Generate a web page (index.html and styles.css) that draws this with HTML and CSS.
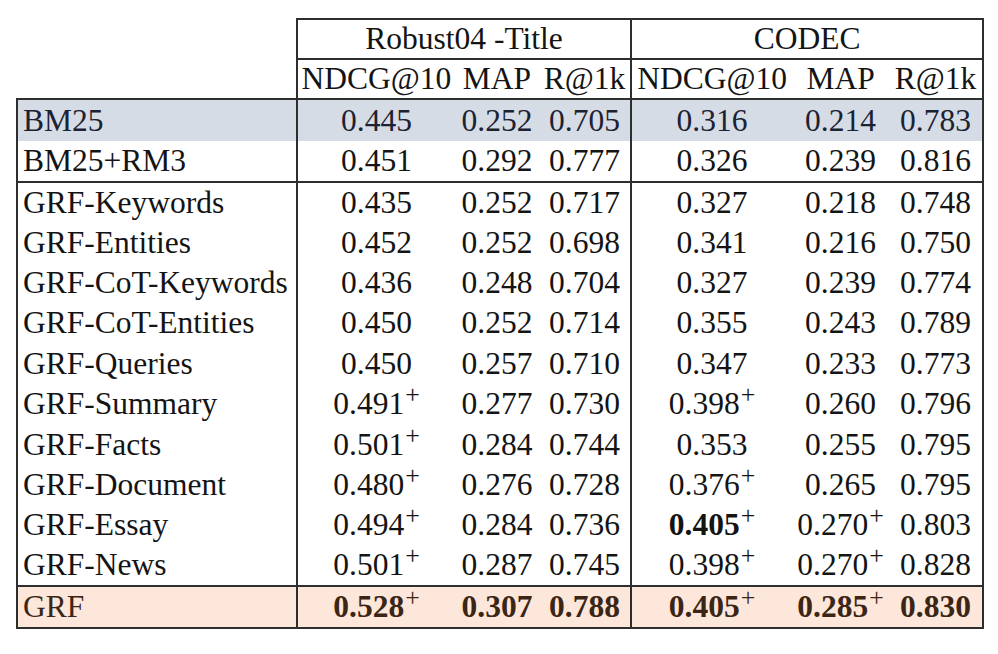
FILE: index.html
```html
<!DOCTYPE html>
<html>
<head>
<meta charset="utf-8">
<link rel="stylesheet" href="styles.css">
</head>
<body>
<table class="results">
  <colgroup>
    <col class="c-label">
    <col class="c-ndcg1">
    <col class="c-map1">
    <col class="c-rk1">
    <col class="c-ndcg2">
    <col class="c-map2">
    <col class="c-rk2">
  </colgroup>
  <thead>
    <tr class="hrow">
      <th class="blank"></th>
      <th colspan="3" class="grp">Robust04 -Title</th>
      <th colspan="3" class="grp">CODEC</th>
    </tr>
    <tr class="hrow sub">
      <th class="blank"></th>
      <th class="gl">NDCG@10</th>
      <th>MAP</th>
      <th class="gr">R@1k</th>
      <th class="gl">NDCG@10</th>
      <th>MAP</th>
      <th class="gr">R@1k</th>
    </tr>
  </thead>
  <tbody>
    <tr class="row base ruled">
      <td class="label">BM25</td><td class="gl">0.445</td><td>0.252</td><td class="gr">0.705</td><td class="gl">0.316</td><td>0.214</td><td class="gr">0.783</td>
    </tr>
    <tr class="row rm3">
      <td class="label">BM25+RM3</td><td class="gl">0.451</td><td>0.292</td><td class="gr">0.777</td><td class="gl">0.326</td><td>0.239</td><td class="gr">0.816</td>
    </tr>
    <tr class="row ruled">
      <td class="label">GRF-Keywords</td><td class="gl">0.435</td><td>0.252</td><td class="gr">0.717</td><td class="gl">0.327</td><td>0.218</td><td class="gr">0.748</td>
    </tr>
    <tr class="row">
      <td class="label">GRF-Entities</td><td class="gl">0.452</td><td>0.252</td><td class="gr">0.698</td><td class="gl">0.341</td><td>0.216</td><td class="gr">0.750</td>
    </tr>
    <tr class="row">
      <td class="label">GRF-CoT-Keywords</td><td class="gl">0.436</td><td>0.248</td><td class="gr">0.704</td><td class="gl">0.327</td><td>0.239</td><td class="gr">0.774</td>
    </tr>
    <tr class="row">
      <td class="label">GRF-CoT-Entities</td><td class="gl">0.450</td><td>0.252</td><td class="gr">0.714</td><td class="gl">0.355</td><td>0.243</td><td class="gr">0.789</td>
    </tr>
    <tr class="row">
      <td class="label">GRF-Queries</td><td class="gl">0.450</td><td>0.257</td><td class="gr">0.710</td><td class="gl">0.347</td><td>0.233</td><td class="gr">0.773</td>
    </tr>
    <tr class="row">
      <td class="label">GRF-Summary</td><td class="gl">0.491<sup>+</sup></td><td>0.277</td><td class="gr">0.730</td><td class="gl">0.398<sup>+</sup></td><td>0.260</td><td class="gr">0.796</td>
    </tr>
    <tr class="row">
      <td class="label">GRF-Facts</td><td class="gl">0.501<sup>+</sup></td><td>0.284</td><td class="gr">0.744</td><td class="gl">0.353</td><td>0.255</td><td class="gr">0.795</td>
    </tr>
    <tr class="row">
      <td class="label">GRF-Document</td><td class="gl">0.480<sup>+</sup></td><td>0.276</td><td class="gr">0.728</td><td class="gl">0.376<sup>+</sup></td><td>0.265</td><td class="gr">0.795</td>
    </tr>
    <tr class="row">
      <td class="label">GRF-Essay</td><td class="gl">0.494<sup>+</sup></td><td>0.284</td><td class="gr">0.736</td><td class="gl"><b>0.405</b><sup>+</sup></td><td>0.270<sup>+</sup></td><td class="gr">0.803</td>
    </tr>
    <tr class="row">
      <td class="label">GRF-News</td><td class="gl">0.501<sup>+</sup></td><td>0.287</td><td class="gr">0.745</td><td class="gl">0.398<sup>+</sup></td><td>0.270<sup>+</sup></td><td class="gr">0.828</td>
    </tr>
    <tr class="row best ruled">
      <td class="label">GRF</td><td class="gl"><b>0.528</b><sup>+</sup></td><td><b>0.307</b></td><td class="gr"><b>0.788</b></td><td class="gl"><b>0.405</b><sup>+</sup></td><td><b>0.285</b><sup>+</sup></td><td class="gr"><b>0.830</b></td>
    </tr>
  </tbody>
</table>
</body>
</html>
```

FILE: styles.css
```css
html, body {
  margin: 0;
  padding: 0;
  background: #ffffff;
}

.results {
  border-collapse: collapse;
  table-layout: fixed;
  width: 966px;
  margin: 18px 0 0 16px;
  font-family: "Liberation Serif", "Times New Roman", serif;
  font-size: 31.5px;
  color: #141414;
}

.c-label { width: 280px; }
.c-ndcg1 { width: 158px; }
.c-map1 { width: 84px; }
.c-rk1 { width: 92px; }
.c-ndcg2 { width: 161px; }
.c-map2 { width: 97px; }
.c-rk2 { width: 94px; }

.results th,
.results td {
  padding: 0 2px;
  font-weight: normal;
  text-align: center;
  white-space: nowrap;
  line-height: 36px;
}

.hrow { height: 40px; }

.grp {
  border: 2px solid #2e2e2e;
}

.sub th {
  border-top: 2px solid #2e2e2e;
}

.sub th.blank { border: none; }

.gl { border-left: 2px solid #2e2e2e; }
.gr { border-right: 2px solid #2e2e2e; }

.row { height: 40.4px; }
.row.base { height: 42px; }
.row.rm3 { height: 41px; }
.row.best { height: 42px; }

.results td.label {
  text-align: left;
  padding-left: 5px;
  border-left: 2px solid #2e2e2e;
  border-right: 2px solid #2e2e2e;
}

.ruled td { border-top: 2px solid #2e2e2e; }

.best td { border-bottom: 2px solid #2e2e2e; }

.base {
  background: #d6dce6;
  color: #1c2232;
}

.best {
  background: #fde7da;
  color: #3b2616;
}

.results b { font-weight: bold; }

.results sup {
  font-size: 0.82em;
  line-height: 0;
  vertical-align: 0.42em;
  margin-left: 1px;
}
```
